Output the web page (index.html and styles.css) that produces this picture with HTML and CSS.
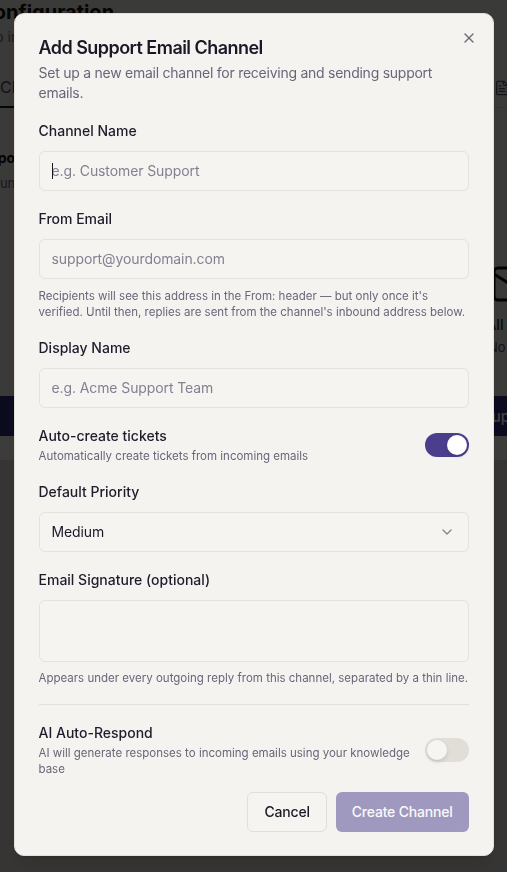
FILE: index.html
```html
<!DOCTYPE html>
<html lang="en">
<head>
<meta charset="utf-8">
<title>Add Support Email Channel</title>
<link rel="stylesheet" href="styles.css">
</head>
<body>
<div class="page">
  <header class="page-head">
    <h1 class="page-title">Configuration</h1>
    <p class="page-sub">Setup inbound and outbound email for support</p>
  </header>
  <nav class="tabs">
    <span class="tab tab-active">Channels</span>
    <span class="tab tab-side">
      <svg class="tab-svg" viewBox="0 0 24 24" fill="none" stroke="currentColor" stroke-width="2" stroke-linecap="round" stroke-linejoin="round"><path d="M15 2H6a2 2 0 0 0-2 2v16a2 2 0 0 0 2 2h12a2 2 0 0 0 2-2V7Z"/><path d="M14 2v4a2 2 0 0 0 2 2h4"/><path d="M10 9H8"/><path d="M16 13H8"/><path d="M16 17H8"/></svg>
      Templates
    </span>
  </nav>
  <section class="channel-card">
    <div class="cc-name">Support Inbox</div>
    <div class="cc-meta">Inbound address</div>
  </section>
  <section class="empty">
    <div class="empty-block">
      <svg class="empty-svg" viewBox="0 0 24 24" fill="none" stroke="currentColor" stroke-width="1.5" stroke-linecap="round" stroke-linejoin="round"><rect width="20" height="16" x="2" y="4" rx="2"/><path d="m22 7-8.97 5.7a1.94 1.94 0 0 1-2.06 0L2 7"/></svg>
      <div class="empty-title">All channels</div>
      <div class="empty-text">No more email channels</div>
    </div>
  </section>
  <div class="page-action"><span class="page-action-text">Support Email</span></div>
  <div class="page-band"></div>
  <div class="page-foot"></div>
</div>

<div class="overlay">
  <div class="dialog" role="dialog" aria-labelledby="dlg-title">
    <button class="close" type="button" aria-label="Close">
      <svg viewBox="0 0 24 24" fill="none" stroke="currentColor" stroke-width="2" stroke-linecap="round" stroke-linejoin="round"><path d="M18 6 6 18"/><path d="m6 6 12 12"/></svg>
    </button>
    <div class="dialog-head">
      <h2 class="dialog-title" id="dlg-title">Add Support Email Channel</h2>
      <p class="dialog-desc">Set up a new email channel for receiving and sending support emails.</p>
    </div>
    <form class="form">
      <div class="field">
        <label class="label" for="f-name">Channel Name</label>
        <div class="input-wrap">
          <input class="input" id="f-name" type="text" placeholder="e.g. Customer Support">
          <span class="caret"></span>
        </div>
      </div>
      <div class="field">
        <label class="label" for="f-email">From Email</label>
        <input class="input" id="f-email" type="text" placeholder="support@yourdomain.com">
        <p class="help help-tight">Recipients will see this address in the From: header — but only once it's verified. Until then, replies are sent from the channel's inbound address below.</p>
      </div>
      <div class="field">
        <label class="label" for="f-display">Display Name</label>
        <input class="input" id="f-display" type="text" placeholder="e.g. Acme Support Team">
      </div>
      <div class="switch-row">
        <div class="switch-text">
          <div class="label">Auto-create tickets</div>
          <div class="help">Automatically create tickets from incoming emails</div>
        </div>
        <span class="switch switch-on"><span class="thumb"></span></span>
      </div>
      <div class="field">
        <label class="label">Default Priority</label>
        <div class="select">
          <span>Medium</span>
          <svg class="chev" viewBox="0 0 24 24" fill="none" stroke="currentColor" stroke-width="2" stroke-linecap="round" stroke-linejoin="round"><path d="m6 9 6 6 6-6"/></svg>
        </div>
      </div>
      <div class="field">
        <label class="label" for="f-sig">Email Signature (optional)</label>
        <textarea class="textarea" id="f-sig"></textarea>
        <p class="help help-sig">Appears under every outgoing reply from this channel, separated by a thin line.</p>
      </div>
      <div class="sep"></div>
      <div class="switch-row">
        <div class="switch-text">
          <div class="label">AI Auto-Respond</div>
          <div class="help">AI will generate responses to incoming emails using your knowledge base</div>
        </div>
        <span class="switch"><span class="thumb"></span></span>
      </div>
    </form>
    <div class="actions">
      <button class="btn btn-outline" type="button">Cancel</button>
      <button class="btn btn-primary" type="button" disabled>Create Channel</button>
    </div>
  </div>
</div>
</body>
</html>
```

FILE: styles.css
```css
* { box-sizing: border-box; }

html, body {
  margin: 0;
  height: 872px;
  overflow: hidden;
}

body {
  font-family: Inter, "Noto Sans", "Liberation Sans", sans-serif;
  background: #e4e1da;
  color: #1b1826;
}

/* ---------- background page ---------- */
.page {
  width: 560px;
  margin-left: -13px;
  background: #e8e7e0;
}

.page-head {
  padding: 0 0 21px 0;
}

.page-title {
  margin: 0;
  font-size: 20px;
  line-height: 24px;
  font-weight: 700;
  color: #111;
  text-indent: -8px;
}

.page-sub {
  margin: 3px 0 0 18px;
  font-size: 14px;
  line-height: 20px;
  color: #6b6579;
  text-indent: -40px;
}

.tabs {
  display: flex;
  justify-content: space-between;
  height: 40px;
  padding: 0 13px;
  border-bottom: 1px solid #d6d3cc;
}

.tab {
  display: flex;
  align-items: center;
  font-size: 16px;
  color: #5a5570;
  white-space: nowrap;
}

.tab-active {
  color: #4a4560;
  border-bottom: 2px solid #1b1826;
  margin-left: -13px;
  padding-left: 13px;
  margin-bottom: -1px;
}

.tab-side {
  width: 40px;
  gap: 6px;
}

.tab-svg {
  width: 16px;
  height: 16px;
  flex: none;
}

.channel-card {
  height: 107px;
  padding: 40px 0 0 0;
  text-indent: -4px;
}

.cc-name {
  font-size: 14px;
  line-height: 20px;
  font-weight: 700;
  color: #111;
  text-indent: -16px;
}

.cc-meta {
  margin-top: 5px;
  font-size: 13px;
  line-height: 20px;
  color: #6b6579;
  text-indent: -14px;
}

.empty {
  display: flex;
  justify-content: flex-end;
  height: 181px;
  padding: 45px 13px 0 0;
}

.empty-block {
  width: 40px;
  white-space: nowrap;
}

.empty-svg {
  display: block;
  width: 48px;
  height: 48px;
  margin-left: -4px;
  color: #111;
}

.empty-title {
  margin-top: 7px;
  font-size: 15px;
  line-height: 20px;
  color: #111;
  text-indent: -8px;
}

.empty-text {
  margin-top: 2px;
  font-size: 13px;
  line-height: 20px;
  color: #555;
  text-indent: -6px;
}

.page-action {
  display: flex;
  align-items: center;
  height: 40px;
  padding-left: 505px;
  background: #302878;
  white-space: nowrap;
}

.page-action-text {
  font-size: 15px;
  font-weight: 500;
  color: #fff;
  text-indent: -10px;
}

.page-band {
  height: 24px;
  background: #f0efeb;
}

.page-foot {
  height: 420px;
  background: #d6d3cc;
}

/* ---------- overlay + dialog ---------- */
.overlay {
  position: fixed;
  inset: 0;
  padding-bottom: 4px;
  background: rgba(0, 0, 0, 0.75);
  display: flex;
  align-items: center;
  justify-content: center;
}

.dialog {
  position: relative;
  width: 480px;
  padding: 25px 24px 23px 24px;
  background: #f4f3f0;
  border: 1px solid #e4e1db;
  border-radius: 10px;
  box-shadow: 0 10px 15px -3px rgba(0, 0, 0, 0.1), 0 4px 6px -4px rgba(0, 0, 0, 0.1);
}

.close {
  position: absolute;
  top: 16px;
  right: 16px;
  width: 16px;
  height: 16px;
  padding: 0;
  border: 0;
  background: none;
  color: #4d4858;
  opacity: 0.8;
}

.close svg {
  display: block;
  width: 16px;
  height: 16px;
}

.dialog-head {
  display: flex;
  flex-direction: column;
  gap: 6px;
}

.dialog-title {
  margin: 0;
  font-size: 18px;
  line-height: 18px;
  font-weight: 600;
  letter-spacing: -0.03em;
  color: #1b1826;
}

.dialog-desc {
  margin: 0;
  font-size: 14px;
  line-height: 20px;
  letter-spacing: -0.25px;
  color: #6b6579;
}

.form {
  display: flex;
  flex-direction: column;
  gap: 18px;
  margin: 18px 0 0 0;
}

.field {
  display: flex;
  flex-direction: column;
}

.label {
  display: block;
  font-size: 14px;
  line-height: 20px;
  font-weight: 500;
  color: #1f1c2b;
  margin-bottom: 10px;
}

.input-wrap {
  position: relative;
}

.input,
.select,
.textarea {
  display: block;
  width: 100%;
  height: 40px;
  padding: 0 12px;
  border: 1px solid #e5e2dc;
  border-radius: 6px;
  background: #f5f4f1;
  font-family: inherit;
  font-size: 14px;
  letter-spacing: -0.1px;
  color: #1b1826;
  outline: none;
}

.input::placeholder,
.textarea::placeholder {
  color: #857f91;
  opacity: 1;
}

.caret {
  position: absolute;
  left: 13px;
  top: 12px;
  width: 1px;
  height: 16px;
  background: #1b1826;
}

.select {
  display: flex;
  align-items: center;
  justify-content: space-between;
}

.chev {
  width: 16px;
  height: 16px;
  color: #1b1826;
  opacity: 0.5;
  margin-right: 1px;
}

.textarea {
  height: 62px;
  padding: 8px 12px;
  resize: none;
}

.help {
  margin: 0;
  font-size: 11.5px;
  line-height: 16px;
  color: #6b6579;
}

.help-tight {
  margin-top: 9px;
}

.help-sig {
  margin-top: 8px;
}

.switch-row {
  display: flex;
  align-items: center;
  gap: 12px;
}

.switch-text {
  flex: 1;
  min-width: 0;
}

.switch-text .label {
  margin-bottom: 2px;
}

.switch {
  flex: none;
  display: flex;
  align-items: center;
  width: 44px;
  height: 24px;
  padding: 2px;
  border-radius: 999px;
  background: #e1ded8;
}

.thumb {
  width: 20px;
  height: 20px;
  border-radius: 50%;
  background: #f6f5f2;
  box-shadow: 0 2px 4px rgba(0, 0, 0, 0.12);
}

.switch-on {
  background: #4b3f8d;
}

.switch-on .thumb {
  background: #fff;
  transform: translateX(20px);
}

.sep {
  height: 1px;
  background: #e3e0da;
}

.actions {
  display: flex;
  justify-content: flex-end;
  gap: 9px;
  margin-top: 15px;
}

.btn {
  height: 40px;
  padding: 0 16px;
  border-radius: 6px;
  font-family: inherit;
  font-size: 14px;
  font-weight: 500;
  letter-spacing: -0.2px;
}

.btn-outline {
  border: 1px solid #e2dfd9;
  background: #f5f4f1;
  color: #1b1826;
}

.btn-primary {
  border: 0;
  background: #4b3f8d;
  color: #fff;
  opacity: 0.5;
}
```
